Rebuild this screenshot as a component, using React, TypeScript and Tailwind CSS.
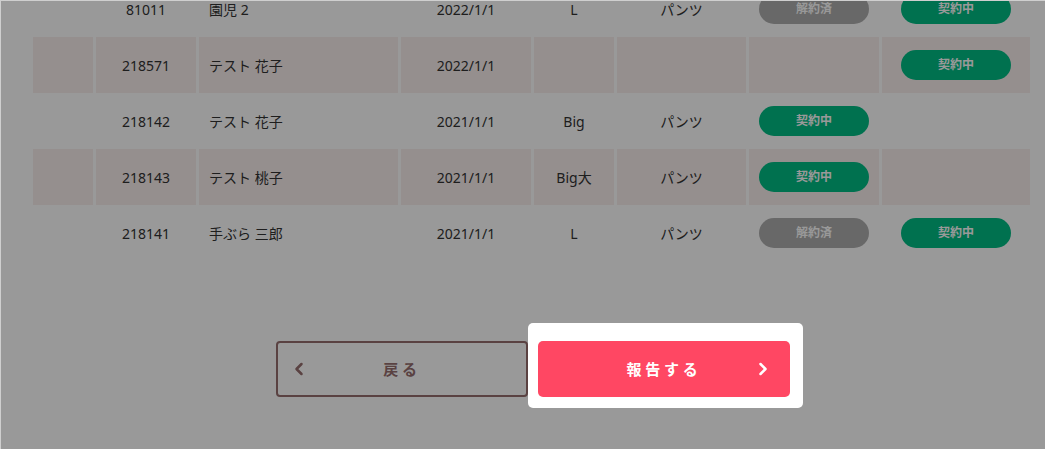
import { ChevronLeft, ChevronRight } from "lucide-react";

type Row = {
  id: string;
  name: string;
  date: string;
  size: string;
  item: string;
  status1: "" | "active" | "ended";
  status2: "" | "active" | "ended";
};

const rows: Row[] = [
  { id: "81011", name: "園児 2", date: "2022/1/1", size: "L", item: "パンツ", status1: "ended", status2: "active" },
  { id: "218571", name: "テスト 花子", date: "2022/1/1", size: "", item: "", status1: "", status2: "active" },
  { id: "218142", name: "テスト 花子", date: "2021/1/1", size: "Big", item: "パンツ", status1: "active", status2: "" },
  { id: "218143", name: "テスト 桃子", date: "2021/1/1", size: "Big大", item: "パンツ", status1: "active", status2: "" },
  { id: "218141", name: "手ぶら 三郎", date: "2021/1/1", size: "L", item: "パンツ", status1: "ended", status2: "active" },
];

function Badge({ status }: { status: Row["status1"] }) {
  if (!status) return null;
  if (status === "active") {
    return (
      <span className="flex h-[30px] w-[110px] items-center justify-center rounded-full bg-[#00bc84] text-[12px] font-bold text-white">
        契約中
      </span>
    );
  }
  return (
    <span className="flex h-[30px] w-[110px] items-center justify-center rounded-full bg-[#aeaeae] text-[12px] font-bold text-white">
      解約済
    </span>
  );
}

export default function App() {
  return (
    <div
      className="relative h-screen overflow-hidden border-t border-l border-[#cfcfcf] bg-white text-[14px] text-[#333]"
      style={{ fontFamily: '"Noto Sans", "Noto Sans CJK JP", sans-serif' }}
    >
      <div className="-mt-[20px] pl-[32px]">
        {rows.map((r, i) => {
          const cell = i % 2 === 1 ? "bg-[#f8eeed]" : "";
          return (
            <div
              key={r.id}
              className="grid h-[56px] grid-cols-[60px_100px_199px_130px_80px_129px_130px_148px] gap-x-[3px]"
            >
              <div className={cell} />
              <div className={`${cell} flex items-center justify-center`}>{r.id}</div>
              <div className={`${cell} flex items-center pl-[10px]`}>{r.name}</div>
              <div className={`${cell} flex items-center justify-center`}>{r.date}</div>
              <div className={`${cell} flex items-center justify-center`}>{r.size}</div>
              <div className={`${cell} flex items-center justify-center`}>{r.item}</div>
              <div className={`${cell} flex items-center justify-center`}>
                <Badge status={r.status1} />
              </div>
              <div className={`${cell} flex items-center justify-center`}>
                <Badge status={r.status2} />
              </div>
            </div>
          );
        })}
      </div>

      <div className="mt-[80px] flex justify-center gap-[10px] pl-[20px]">
        <button className="relative flex h-[56px] w-[252px] items-center justify-center rounded-[4px] border-2 border-[#966e6e] text-[15px] font-bold tracking-[0.25em] text-[#966e6e]">
          <ChevronLeft className="absolute left-[11px] size-[20px]" strokeWidth={3} />
          戻る
        </button>

        <div className="relative z-20">
          <div className="absolute -top-[18px] -right-[13px] -bottom-[11px] -left-[10px] rounded-[5px] bg-white" />
          <button className="relative flex h-[56px] w-[252px] items-center justify-center rounded-[5px] bg-[#ff4763] text-[15px] font-bold tracking-[0.25em] text-white">
            報告する
            <ChevronRight className="absolute right-[17px] size-[20px]" strokeWidth={3} />
          </button>
        </div>
      </div>

      <div className="absolute inset-0 z-10 bg-black/40" />
    </div>
  );
}
